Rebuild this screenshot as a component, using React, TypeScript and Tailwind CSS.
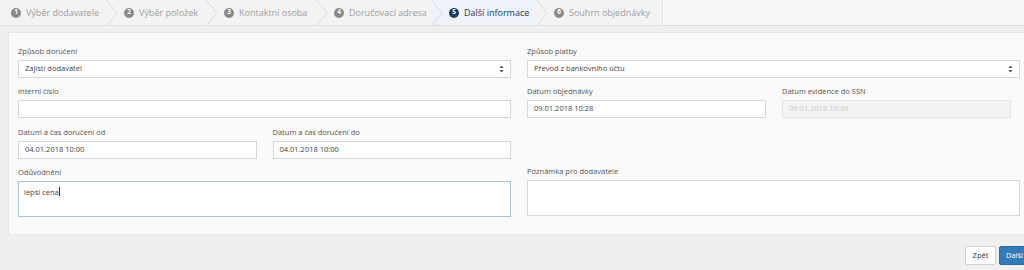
import type { ReactNode } from 'react'

const steps = [
  { n: 1, label: 'Výběr dodavatele', w: 'w-[106px]' },
  { n: 2, label: 'Výběr položek', w: 'w-[100px]' },
  { n: 3, label: 'Kontaktní osoba', w: 'w-[110px]' },
  { n: 4, label: 'Doručovací adresa', w: 'w-[115px]' },
  { n: 5, label: 'Další informace', w: 'w-[105px]', active: true },
  { n: 6, label: 'Souhrn objednávky', w: 'flex-1' },
]

const Chevron = () => (
  <svg width="12" height="26" viewBox="0 0 12 26" className="shrink-0">
    <path d="M0.5 0 L11 13 L0.5 26" fill="none" stroke="#dadada" strokeWidth="1" />
  </svg>
)

const Label = ({ children }: { children: ReactNode }) => (
  <div className="mb-[4px] h-[9px] text-[7.5px] leading-[9px] text-[#555]">{children}</div>
)

const Field = ({
  label,
  value,
  disabled,
  className,
}: {
  label: string
  value?: string
  disabled?: boolean
  className?: string
}) => (
  <div className={className}>
    <Label>{label}</Label>
    <div
      className={`flex h-[18px] items-center border px-[6px] text-[7.5px] ${
        disabled
          ? 'border-[#e4e4e4] bg-[#f3f3f3] text-[#c8c8c8]'
          : 'border-[#d6d6d6] bg-white text-[#444]'
      }`}
    >
      {value}
    </div>
  </div>
)

const Select = ({ label, value }: { label: string; value: string }) => (
  <div>
    <Label>{label}</Label>
    <div className="flex h-[18px] items-center justify-between border border-[#d6d6d6] bg-white px-[6px] text-[7.5px] text-[#444]">
      <span>{value}</span>
      <svg width="5" height="8" viewBox="0 0 5 8">
        <path d="M0.5 3 L2.5 0.5 L4.5 3 Z M0.5 5 L2.5 7.5 L4.5 5 Z" fill="#555" />
      </svg>
    </div>
  </div>
)

const App = () => {
  return (
    <div className="h-[270px] w-[1024px] overflow-hidden bg-[#efefef] font-['Open_Sans',sans-serif]">
      <div className="flex h-[26px] border-b border-[#dedede] bg-[#f3f3f3]">
        <div className="flex w-[662px]">
          {steps.map((s) => (
            <div
              key={s.n}
              className={`flex h-full shrink-0 items-center ${s.w} ${s.active ? 'bg-[#edf3f9]' : ''} ${
                s.n === 1 ? 'pl-[11px]' : ''
              }`}
            >
              {s.n > 1 && <Chevron />}
              <span
                className={`flex h-[10px] w-[10px] shrink-0 items-center justify-center rounded-full text-[6.5px] font-bold leading-none text-white ${
                  s.n > 1 ? 'ml-[6px]' : ''
                } ${s.active ? 'bg-[#1d3a5c]' : 'bg-[#8a8a8a]'}`}
              >
                {s.n}
              </span>
              <span
                className={`ml-[5px] whitespace-nowrap text-[9px] ${
                  s.active ? 'text-[#1d3a5c]' : 'text-[#9d9d9d]'
                }`}
              >
                {s.label}
              </span>
            </div>
          ))}
        </div>
        <div className="flex-1 border-l border-[#e2e2e2] bg-[#f8f8f8]" />
      </div>

      <div className="ml-[8px] mt-[6px] h-[203px] w-[1030px] border border-[#e6e6e6] bg-[#fafafa] pl-[9px] pt-[14px]">
        <div className="grid grid-cols-[493px_493px] gap-x-[16px]">
          <div className="flex flex-col gap-y-[9px]">
            <Select label="Způsob doručení" value="Zajistí dodavatel" />
            <Field label="Interní číslo" />
            <div className="grid grid-cols-2 gap-x-[16px] pt-[1px]">
              <Field label="Datum a čas doručení od" value="04.01.2018 10:00" />
              <Field label="Datum a čas doručení do" value="04.01.2018 10:00" />
            </div>
            <div>
              <Label>Odůvodnění</Label>
              <div className="h-[36px] border border-[#a9c4da] bg-white px-[5px] pt-[4px] text-[7.5px] leading-[10px] text-[#444]">
                lepší cena<span className="ml-[0.5px] inline-block h-[9px] w-px translate-y-[1px] bg-[#333]" />
              </div>
            </div>
          </div>
          <div className="flex flex-col gap-y-[9px]">
            <Select label="Způsob platby" value="Převod z bankovního účtu" />
            <div className="flex gap-x-[16px]">
              <Field className="w-[239px]" label="Datum objednávky" value="09.01.2018 10:28" />
              <Field className="w-[229px]" label="Datum evidence do SSN" value="09.01.2018 10:38" disabled />
            </div>
            <div className="h-[31px]" />
            <div>
              <Label>Poznámka pro dodavatele</Label>
              <div className="h-[36px] border border-[#d6d6d6] bg-white" />
            </div>
          </div>
        </div>
      </div>

      <div className="mt-[11px] flex justify-end gap-[3px]">
        <button
          type="button"
          className="h-[19px] w-[31px] rounded-[2px] border border-[#d0d0d0] bg-white text-[7.5px] text-[#333]"
        >
          Zpět
        </button>
        <button
          type="button"
          className="-mr-[6px] h-[19px] w-[31px] rounded-[2px] border border-[#2e6da4] bg-[#337ab7] text-[7.5px] text-white"
        >
          Další
        </button>
      </div>
    </div>
  )
}

export default App
